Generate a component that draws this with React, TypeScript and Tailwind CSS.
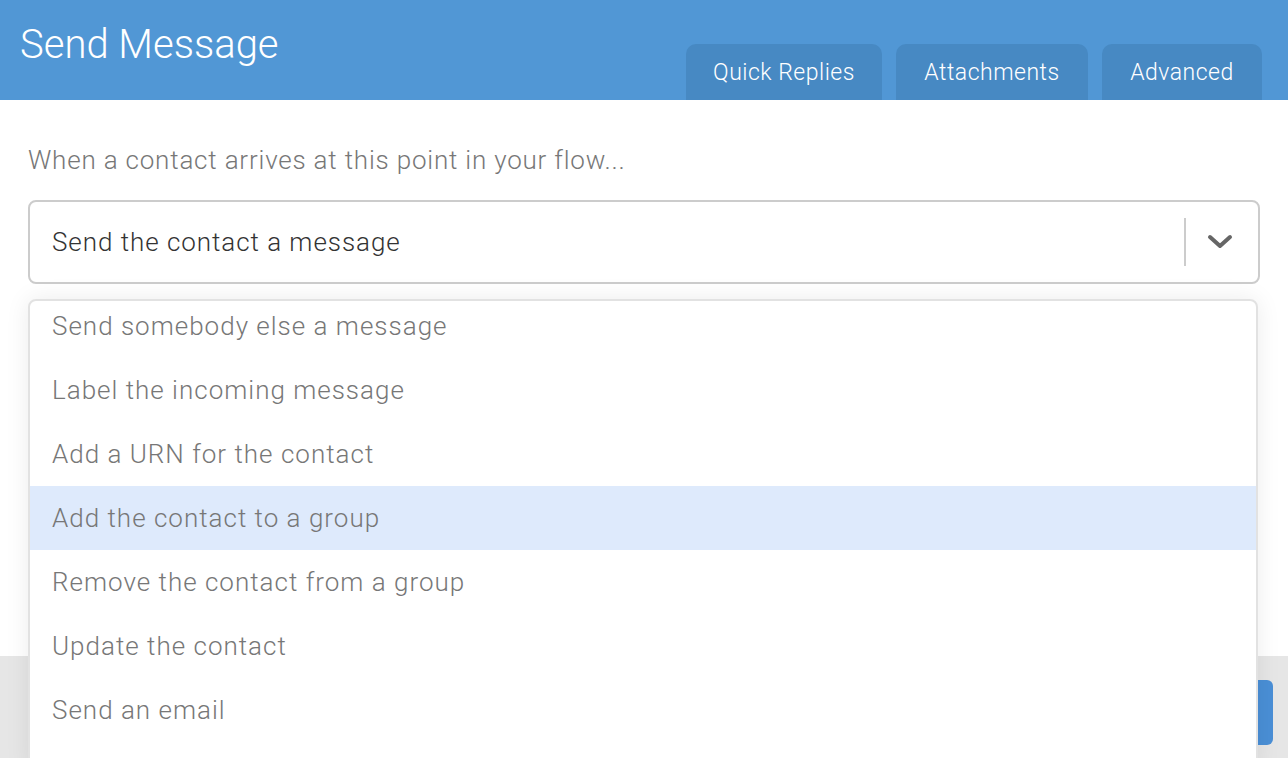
import React from "react";

const items = [
  "Send somebody else a message",
  "Label the incoming message",
  "Add a URN for the contact",
  "Add the contact to a group",
  "Remove the contact from a group",
  "Update the contact",
  "Send an email",
];

export default function App() {
  return (
    <div
      className="relative w-[1288px] h-[758px] overflow-hidden bg-white"
      style={{ fontFamily: "Roboto, 'Liberation Sans', sans-serif" }}
    >
      <div className="h-[100px] bg-[#5197d5] flex justify-between">
        <div className="pl-[20px] pt-[19px] text-[40px] leading-[52px] font-light text-white">
          Send Message
        </div>
        <div className="flex items-end gap-[14px] pr-[26px]">
          <div className="h-[56px] w-[196px] pt-[2px] rounded-t-[10px] bg-[#4789c3] flex items-center justify-center text-white text-[23px] tracking-[0.5px] font-light">
            Quick Replies
          </div>
          <div className="h-[56px] w-[192px] pt-[2px] rounded-t-[10px] bg-[#4789c3] flex items-center justify-center text-white text-[23px] tracking-[0.5px] font-light">
            Attachments
          </div>
          <div className="h-[56px] w-[160px] pt-[2px] rounded-t-[10px] bg-[#4789c3] flex items-center justify-center text-white text-[23px] tracking-[0.5px] font-light">
            Advanced
          </div>
        </div>
      </div>
      <div className="h-[556px] px-[28px] pt-[42px]">
        <div className="text-[26px] leading-[36px] tracking-[0.8px] font-light text-[#777]">
          When a contact arrives at this point in your flow...
        </div>
        <div className="mt-[22px] h-[84px] border-2 border-[#cccccc] rounded-[8px] flex items-center">
          <div className="flex-1 pl-[22px] text-[26px] tracking-[0.95px] font-light text-[#333]">
            Send the contact a message
          </div>
          <div className="w-[2px] h-[48px] bg-[#cccccc]" />
          <div className="w-[72px] flex items-center justify-center pr-[4px]">
            <svg width="26" height="16" viewBox="0 0 26 16">
              <path d="M3 3 L13 12 L23 3" fill="none" stroke="#666" strokeWidth="4" strokeLinecap="round" strokeLinejoin="round" />
            </svg>
          </div>
        </div>
      </div>
      <div className="h-[102px] bg-[#e6e6e6] flex justify-end pr-[15px] pt-[24px]">
        <div className="w-[120px] h-[65px] rounded-[6px] bg-[#4a8fd6]" />
      </div>
      <div className="absolute left-[28px] top-[299px] w-[1230px] h-[470px] bg-white border-2 border-[#e2e2e2] rounded-t-[8px] overflow-hidden shadow-[0_0_24px_rgba(0,0,0,0.08)]">
        <div className="-mt-[7px]">
          {items.map((t, i) => (
            <div
              key={t}
              className={`h-[64px] flex items-center pl-[22px] text-[26px] tracking-[1px] font-light text-[#777] ${i === 3 ? "bg-[#deeafc]" : ""}`}
            >
              {t}
            </div>
          ))}
        </div>
      </div>
    </div>
  );
}
